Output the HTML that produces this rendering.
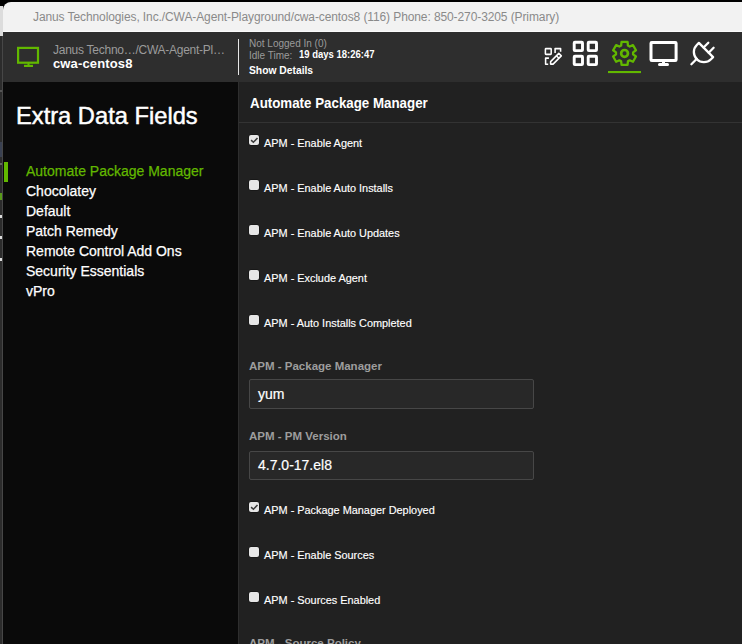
<!DOCTYPE html>
<html><head><meta charset="utf-8">
<style>
*{margin:0;padding:0;box-sizing:border-box}
html,body{width:742px;height:644px;overflow:hidden;background:#000;font-family:"Liberation Sans",sans-serif;position:relative}
.a{position:absolute;white-space:nowrap}
#ls{left:0;top:6px;width:3px;height:638px;background:#2c2c2c;border-right:1px solid #474747}
#ls2{left:0;top:6px;width:3px;height:30px;background:#dcdcdc}
#title{left:3px;top:2px;width:739px;height:30px;background:#f2f2f2;border-top-left-radius:8px;border-bottom:1px solid #fafafa}
#ttxt{left:33px;top:10px;font-size:12px;letter-spacing:-0.1px;color:#8a8a8a}
#hdr{left:3px;top:32px;width:739px;height:50px;background:#2e2e2e}
#side{left:3px;top:82px;width:235px;height:562px;background:#0a0a0a}
#main{left:238px;top:82px;width:504px;height:562px;background:#212121;border-left:1px solid #2e2e2e}
#vline{left:237.5px;top:39px;width:1.5px;height:36px;background:#e6e6e6}
.menu{left:26px;font-size:14px;color:#fff;-webkit-text-stroke:0.25px currentColor}
.g{color:#62b800}
.cb{position:absolute;left:249px;width:10px;height:10px;background:#e6e6e6;border-radius:2px;box-shadow:0 0 0 0.5px #111}
.cbl{left:264px;font-size:10.9px;color:#fff;-webkit-text-stroke:0.15px #fff}
.lbl{left:249px;font-size:11.5px;font-weight:bold;color:#9d9d9d}
.inp{position:absolute;left:249px;width:285px;height:29.5px;border:1px solid #474747;border-radius:2px;background:#282828}
.itx{left:258px;font-size:14px;color:#fff;-webkit-text-stroke:0.2px #fff}
</style></head><body>
<div class="a" id="ls"></div>
<div class="a" id="ls2"></div>
<div class="a" style="left:0;top:90px;width:2px;height:2px;background:#555"></div>
<div class="a" style="left:0;top:142px;width:2px;height:15px;background:#3a4152"></div>
<div class="a" style="left:0;top:163px;width:2px;height:2px;background:#666"></div>
<div class="a" style="left:0;top:193px;width:2px;height:7px;background:#5a9a1a"></div>
<div class="a" style="left:0;top:215px;width:2px;height:3px;background:#ddd"></div>
<div class="a" style="left:0;top:236px;width:2px;height:3px;background:#ddd"></div>
<div class="a" style="left:0;top:258px;width:2px;height:3px;background:#ddd"></div>
<div class="a" id="title"></div>
<div class="a" id="ttxt">Janus Technologies, Inc./CWA-Agent-Playground/cwa-centos8 (116) Phone: 850-270-3205 (Primary)</div>
<div class="a" id="hdr"></div>
<div class="a" id="side"></div>
<div class="a" id="main"></div>

<!-- header -->
<svg class="a" style="left:17px;top:46px" width="23" height="22" viewBox="0 0 23 22">
  <rect x="1.1" y="1.9" width="19.9" height="14.8" fill="none" stroke="#62b800" stroke-width="2.2"/>
  <rect x="10.5" y="17" width="2" height="3" fill="#62b800"/>
  <rect x="7" y="18.8" width="9" height="2.2" fill="#62b800"/>
</svg>
<div class="a" style="left:53px;top:43px;font-size:12px;color:#9b9b9b;letter-spacing:-0.26px">Janus Techno…/CWA-Agent-Pl…</div>
<div class="a" style="left:53px;top:56.3px;font-size:13px;letter-spacing:0.14px;font-weight:bold;color:#fff">cwa-centos8</div>
<div class="a" id="vline"></div>
<div class="a" style="left:249px;top:37.5px;font-size:10px;color:#9b9b9b">Not Logged In (0)</div>
<div class="a" style="left:249px;top:50px;font-size:10px;color:#9b9b9b">Idle Time:</div>
<div class="a" style="left:298.5px;top:49.3px;font-size:10.4px;font-weight:bold;color:#fff;transform:scaleX(0.915);transform-origin:0 0">19 days 18:26:47</div>
<div class="a" style="left:249px;top:64.7px;font-size:10.3px;font-weight:bold;color:#fff">Show Details</div>

<!-- sidebar -->
<div class="a" style="left:16px;top:103px;font-size:23.7px;color:#fff;-webkit-text-stroke:0.45px #fff">Extra Data Fields</div>
<div class="a" style="left:4px;top:162px;width:4px;height:20px;background:#62b800"></div>
<div class="a menu g" style="top:163px">Automate Package Manager</div>
<div class="a menu" style="top:183px">Chocolatey</div>
<div class="a menu" style="top:203px">Default</div>
<div class="a menu" style="top:223px">Patch Remedy</div>
<div class="a menu" style="top:243px">Remote Control Add Ons</div>
<div class="a menu" style="top:263px">Security Essentials</div>
<div class="a menu" style="top:283px">vPro</div>

<!-- main -->
<div class="a" style="left:250px;top:95px;font-size:14px;font-weight:bold;color:#fff;transform:scaleX(0.952);transform-origin:0 0">Automate Package Manager</div>
<div class="a" style="left:239px;top:122px;width:503px;height:1px;background:#333"></div>

<div class="cb" style="top:135px"><svg width="10" height="10" style="position:absolute;left:0;top:0"><path d="M2.1 5.1 L4.4 7.3 L8.5 2.9" fill="none" stroke="#3a3a3a" stroke-width="1.5"/></svg></div>
<div class="a cbl" style="top:137px">APM - Enable Agent</div>
<div class="cb" style="top:180px"></div>
<div class="a cbl" style="top:182px">APM - Enable Auto Installs</div>
<div class="cb" style="top:225px"></div>
<div class="a cbl" style="top:227px">APM - Enable Auto Updates</div>
<div class="cb" style="top:270px"></div>
<div class="a cbl" style="top:272px">APM - Exclude Agent</div>
<div class="cb" style="top:315px"></div>
<div class="a cbl" style="top:317px">APM - Auto Installs Completed</div>

<div class="a lbl" style="top:360px">APM - Package Manager</div>
<div class="inp" style="top:379px"></div>
<div class="a itx" style="top:386px">yum</div>
<div class="a lbl" style="top:430px">APM - PM Version</div>
<div class="inp" style="top:450.5px"></div>
<div class="a itx" style="top:457px">4.7.0-17.el8</div>

<div class="cb" style="top:502px"><svg width="10" height="10" style="position:absolute;left:0;top:0"><path d="M2.1 5.1 L4.4 7.3 L8.5 2.9" fill="none" stroke="#3a3a3a" stroke-width="1.5"/></svg></div>
<div class="a cbl" style="top:504px">APM - Package Manager Deployed</div>
<div class="cb" style="top:547px"></div>
<div class="a cbl" style="top:549px">APM - Enable Sources</div>
<div class="cb" style="top:592px"></div>
<div class="a cbl" style="top:594px">APM - Sources Enabled</div>
<div class="a lbl" style="top:636.5px">APM - Source Policy</div>

<!-- toolbar icons -->
<svg class="a" style="left:0;top:0" width="742" height="644" viewBox="0 0 742 644">
  <g fill="none" stroke="#fff" stroke-width="1.55" stroke-linejoin="round" stroke-linecap="butt">
    <rect x="545.4" y="48.6" width="5.8" height="5.8" rx="0.6"/>
    <path d="M555.1 52.9 V48.6 H560.6 V51.7"/>
    <path d="M548.9 58.1 H545.6 V64.2 H548.2"/>
    <path d="M550.6 64.1 H553.1 L561.3 55.9 L558.8 53.4 L550.6 61.6 Z"/>
    <path d="M556.4 55.8 L558.9 58.3"/>
  </g>
  <g fill="none" stroke="#fff" stroke-width="2.9">
    <rect x="574.2" y="42.3" width="8.3" height="8.3" rx="0.7"/>
    <rect x="588.2" y="42.3" width="8.3" height="8.3" rx="0.7"/>
    <rect x="574.2" y="56.3" width="8.3" height="8.3" rx="0.7"/>
    <rect x="588.2" y="56.3" width="8.3" height="8.3" rx="0.7"/>
  </g>
  <g fill="none" stroke="#62b800" stroke-width="2.3" stroke-linejoin="round">
    <path d="M621.15 45.50 L621.55 41.95 L627.55 41.95 L627.95 45.50 L629.69 46.51 L632.97 45.08 L635.97 50.27 L633.09 52.39 L633.09 54.41 L635.97 56.53 L632.97 61.72 L629.69 60.29 L627.95 61.30 L627.55 64.85 L621.55 64.85 L621.15 61.30 L619.41 60.29 L616.13 61.72 L613.13 56.53 L616.01 54.41 L616.01 52.39 L613.13 50.27 L616.13 45.08 L619.41 46.51Z"/>
    <circle cx="624.55" cy="53.4" r="3.4" stroke-width="2.7"/>
  </g>
  <rect x="608" y="71" width="33" height="2.1" fill="#62b800"/>
  <g fill="none" stroke="#fff" stroke-width="3">
    <rect x="651" y="42.4" width="25.1" height="18.2" rx="0.8"/>
  </g>
  <rect x="662" y="61" width="3" height="3" fill="#fff"/>
  <rect x="658" y="63.1" width="11" height="3" rx="1.5" fill="#fff"/>
  <g fill="none" stroke="#fff" stroke-width="2.3" stroke-linecap="round" stroke-linejoin="round">
    <path d="M698.9 42.9 L713.1 57.1 L711.0 59.2 A10 10 0 0 1 696.8 45.0 Z"/>
    <path d="M703.55 47.55 L708.3 42.8"/>
    <path d="M708.7 52.7 L713.6 47.8"/>
    <path d="M691.4 64.2 L696.8 58.8"/>
  </g>
</svg>
</body></html>
